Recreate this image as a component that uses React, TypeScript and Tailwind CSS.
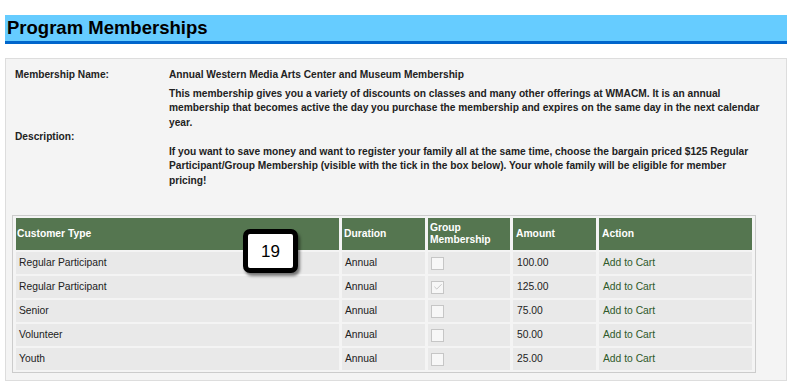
import { Check } from "lucide-react";

// rows of the membership price table
const rows = [
  { type: "Regular Participant", group: false, amount: "100.00" },
  { type: "Regular Participant", group: true, amount: "125.00" },
  { type: "Senior", group: false, amount: "75.00" },
  { type: "Volunteer", group: false, amount: "50.00" },
  { type: "Youth", group: false, amount: "25.00" },
];

// description lines, broken where the original page wraps them
const descLines = [
  "This membership gives you a variety of discounts on classes and many other offerings at WMACM. It is an annual",
  "membership that becomes active the day you purchase the membership and expires on the same day in the next calendar",
  "year.",
  "",
  "If you want to save money and want to register your family all at the same time, choose the bargain priced $125 Regular",
  "Participant/Group Membership (visible with the tick in the box below). Your whole family will be eligible for member",
  "pricing!",
];

function GroupBox({ checked }: { checked: boolean }) {
  return (
    <span className="flex h-[13px] w-[13px] items-center justify-center border border-[#c6c6c6] bg-[#f7f7f7]">
      {checked && <Check size={10} strokeWidth={1.5} className="text-[#a8a8a8]" />}
    </span>
  );
}

export default function App() {
  return (
    <div
      className="relative min-h-[385px] bg-white px-[5px] pt-[15px] text-[#222]"
      style={{ fontFamily: '"Liberation Sans", Arial, sans-serif' }}
    >
      {/* Title bar */}
      <div className="h-[29px] border-b-[3px] border-[#0066cc] bg-[#66ccff] pl-[2px] text-[18.5px] font-bold leading-[26px] text-black">
        Program Memberships
      </div>

      {/* Panel */}
      <div className="mt-[14px] border border-[#dddddd] bg-[#f4f4f4] px-[6px] pb-[7px] pt-[7px]">
        <table className="text-[10.2px] font-bold leading-[14.5px]">
          <tbody>
            <tr>
              <td className="w-[157px] py-[2px] pl-[3px] align-middle">Membership Name:</td>
              <td className="py-[2px]">Annual Western Media Arts Center and Museum Membership</td>
            </tr>
            <tr>
              <td className="pl-[3px] align-middle">Description:</td>
              <td className="py-[2px]">
                {descLines.map((l, i) => (
                  <div key={i} className="h-[14.5px] whitespace-nowrap">
                    {l}
                  </div>
                ))}
              </td>
            </tr>
          </tbody>
        </table>

        <table className="mt-[25px] w-[744px] border-separate border-spacing-x-[3px] border-spacing-y-[2px] border border-[#cccccc] bg-[#f4f4f4] text-[10.3px]">
          <thead>
            <tr className="h-[32px] bg-[#557650] text-left font-bold leading-[12px] text-white">
              <th className="w-[323px] px-[1px] font-bold">Customer Type</th>
              <th className="w-[83px] px-[2px] font-bold">Duration</th>
              <th className="w-[82px] px-[2px] font-bold">
                Group
                <br />
                Membership
              </th>
              <th className="w-[83px] px-[3px] font-bold">Amount</th>
              <th className="px-[3px] font-bold">Action</th>
            </tr>
          </thead>
          <tbody>
            {rows.map((r, i) => (
              <tr key={i} className="h-[22px] bg-[#e9e9e9]">
                <td className="px-[3px]">{r.type}</td>
                <td className="px-[3px]">Annual</td>
                <td className="px-[3px]">
                  <GroupBox checked={r.group} />
                </td>
                <td className="px-[4px]">{r.amount}</td>
                <td className="px-[4px] text-[#2f5a2a]">Add to Cart</td>
              </tr>
            ))}
          </tbody>
        </table>
      </div>

      {/* step badge */}
      <div className="absolute left-[243px] top-[229px] flex h-[44px] w-[55px] items-center justify-center rounded-[7px] border-[5px] border-black bg-white pt-[2px] text-[17px] text-black shadow-[2px_3px_3px_rgba(0,0,0,0.5)]">
        19
      </div>
    </div>
  );
}
